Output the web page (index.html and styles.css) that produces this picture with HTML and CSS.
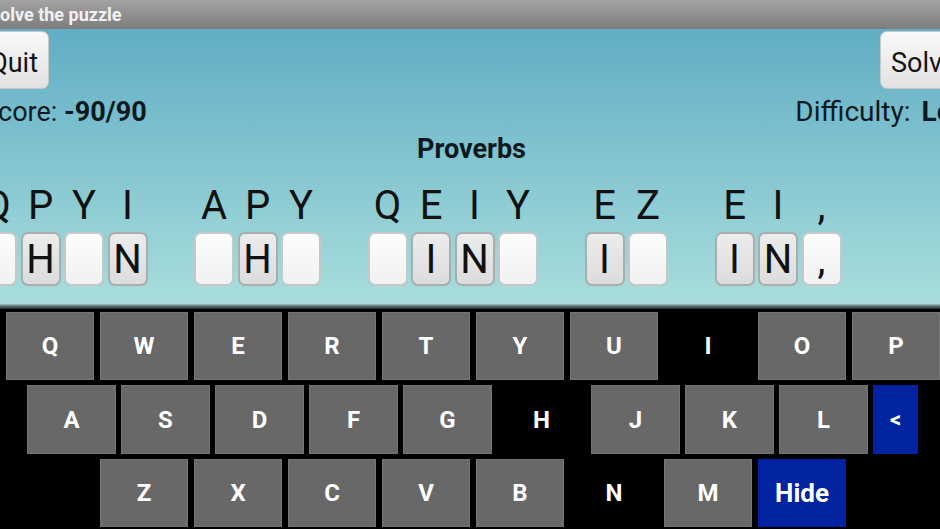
FILE: index.html
```html
<!DOCTYPE html>
<html lang="en">
<head>
<meta charset="utf-8">
<title>Solve the puzzle</title>
<link rel="stylesheet" href="styles.css">
</head>
<body>
<div class="app">
  <header class="titlebar"><span class="title">Solve the puzzle</span></header>
  <main class="board">
    <div class="actions">
      <button class="btn btn-quit">Quit</button>
      <button class="btn btn-solve">Solve</button>
    </div>
    <div class="stats">
      <span class="score">Score: <b>-90/90</b></span>
      <span class="difficulty">Difficulty: <b>Low</b></span>
    </div>
    <div class="category">Proverbs</div>
    <div class="puzzle">
      <div class="word word-first">
        <div class="cell"><span class="cipher">Q</span><span class="tile"></span></div>
        <div class="cell"><span class="cipher">P</span><span class="tile filled">H</span></div>
        <div class="cell"><span class="cipher">Y</span><span class="tile"></span></div>
        <div class="cell"><span class="cipher">I</span><span class="tile filled">N</span></div>
      </div>
      <div class="word">
        <div class="cell"><span class="cipher">A</span><span class="tile"></span></div>
        <div class="cell"><span class="cipher">P</span><span class="tile filled">H</span></div>
        <div class="cell"><span class="cipher">Y</span><span class="tile"></span></div>
      </div>
      <div class="word">
        <div class="cell"><span class="cipher">Q</span><span class="tile"></span></div>
        <div class="cell"><span class="cipher">E</span><span class="tile filled">I</span></div>
        <div class="cell"><span class="cipher">I</span><span class="tile filled">N</span></div>
        <div class="cell"><span class="cipher">Y</span><span class="tile"></span></div>
      </div>
      <div class="word">
        <div class="cell"><span class="cipher">E</span><span class="tile filled">I</span></div>
        <div class="cell"><span class="cipher">Z</span><span class="tile"></span></div>
      </div>
      <div class="word">
        <div class="cell"><span class="cipher">E</span><span class="tile filled">I</span></div>
        <div class="cell"><span class="cipher">I</span><span class="tile filled">N</span></div>
        <div class="cell"><span class="cipher">,</span><span class="tile">,</span></div>
      </div>
    </div>
  </main>
  <section class="keyboard">
    <div class="krow krow-1">
      <span class="key">Q</span><span class="key">W</span><span class="key">E</span><span class="key">R</span><span class="key">T</span><span class="key">Y</span><span class="key">U</span><span class="key used">I</span><span class="key">O</span><span class="key">P</span>
    </div>
    <div class="krow krow-2">
      <span class="key">A</span><span class="key">S</span><span class="key">D</span><span class="key">F</span><span class="key">G</span><span class="key used">H</span><span class="key">J</span><span class="key">K</span><span class="key">L</span><span class="key key-back">&lt;</span>
    </div>
    <div class="krow krow-3">
      <span class="key">Z</span><span class="key">X</span><span class="key">C</span><span class="key">V</span><span class="key">B</span><span class="key used">N</span><span class="key">M</span><span class="key key-hide">Hide</span>
    </div>
  </section>
</div>
</body>
</html>
```
FILE: styles.css
```css
html, body {
  margin: 0;
  padding: 0;
  background: #000;
}
body {
  width: 940px;
  height: 529px;
  overflow: hidden;
  font-family: Roboto, "Noto Sans", "Liberation Sans", sans-serif;
}
.app {
  width: 940px;
  height: 529px;
  display: flex;
  flex-direction: column;
  overflow: hidden;
}
.titlebar {
  height: 29px;
  flex: none;
  background: linear-gradient(#a3a3a3, #7d7d7d);
  display: flex;
  align-items: center;
  overflow: hidden;
}
.title {
  margin-left: -11px;
  color: #f2f2f2;
  font-weight: bold;
  font-size: 18px;
  white-space: nowrap;
}
.board {
  height: 280px;
  flex: none;
  background: linear-gradient(#60adc5, #a9dedc 98%, #5a6e6e 99%, #2a2a2a);
  display: flex;
  flex-direction: column;
  overflow: hidden;
}
.actions {
  margin-top: 2px;
  display: flex;
  justify-content: space-between;
}
.btn {
  height: 58px;
  border: 1px solid #c9c9c9;
  border-radius: 7px;
  background: linear-gradient(#f8f8f8, #e2e2e2);
  font-family: inherit;
  font-size: 27px;
  color: #141414;
  padding: 5px 0 0;
}
.btn-quit {
  width: 72px;
  margin-left: -23px;
  text-align: right;
  padding-right: 10px;
}
.btn-solve {
  width: 90px;
  margin-right: -30px;
  text-align: left;
  padding-left: 10px;
}
.stats {
  margin-top: 7px;
  display: flex;
  justify-content: space-between;
  font-size: 27px;
  line-height: 32px;
  color: #0c1a20;
  white-space: nowrap;
}
.stats b { font-weight: bold; }
.score { margin-left: -18px; }
.difficulty { margin-right: -33px; font-size: 28px; }
.difficulty b { margin-left: 4px; }
.category {
  margin-top: 6px;
  text-align: center;
  font-weight: bold;
  font-size: 27px;
  line-height: 30px;
  color: #0c1a20;
  padding-left: 3px;
}
.puzzle {
  margin-top: 22px;
  margin-left: -23px;
  display: flex;
  gap: 46.5px;
}
.word {
  display: flex;
  gap: 3.5px;
}
.cell {
  width: 40px;
  display: flex;
  flex-direction: column;
  align-items: center;
}
.cipher {
  font-size: 40px;
  line-height: 40px;
  height: 40px;
  color: #111;
}
.tile {
  margin-top: 6px;
  box-sizing: border-box;
  width: 40px;
  height: 54px;
  border: 2px solid #c4c8c8;
  border-radius: 7px;
  background: linear-gradient(#fdfdfd, #f1f1f1);
  display: flex;
  align-items: center;
  justify-content: center;
  font-size: 40px;
  color: #111;
}
.tile.filled {
  border-color: #a9adad;
  background: linear-gradient(#ececec, #dcdcdc);
}
.keyboard {
  flex: 1;
  background: #000;
  padding-top: 3px;
  display: flex;
  flex-direction: column;
  gap: 5px;
}
.krow {
  display: flex;
  gap: 6px;
  height: 68px;
}
.krow-1 { margin-left: 6px; }
.krow-2 { margin-left: 27px; gap: 5px; height: 69px; }
.krow-3 { margin-left: 100px; }
.key {
  width: 88px;
  flex: none;
  box-sizing: border-box;
  background: #686868;
  border: 1px solid #747474;
  color: #fff;
  font-weight: bold;
  font-size: 24px;
  display: flex;
  align-items: center;
  justify-content: center;
}
.krow-2 .key { width: 89px; }
.key.used {
  background: #000;
  border-color: #000;
}
.krow-2 .key.key-back {
  width: 45px;
  background: #0224a0;
  border-color: #0224a0;
  font-size: 22px;
}
.key.key-hide {
  background: #0224a0;
  border-color: #0224a0;
  font-size: 26px;
}
```
